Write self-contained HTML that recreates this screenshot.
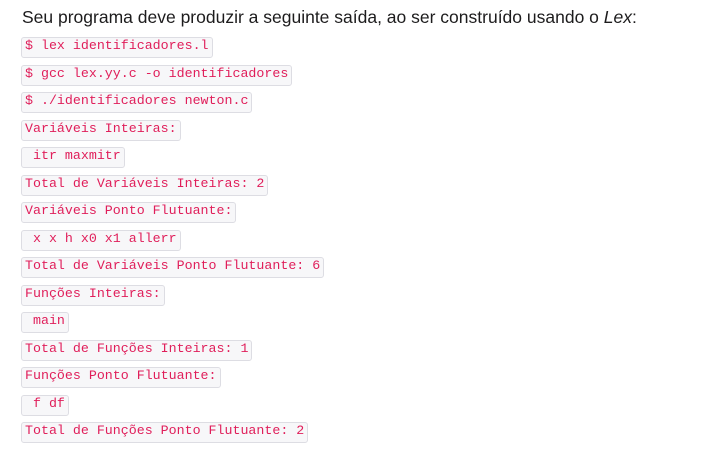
<!DOCTYPE html>
<html><head><meta charset="utf-8"><style>
body{margin:0;background:#fff;width:721px;height:456px;overflow:hidden}
.h{position:absolute;left:22px;top:7px;font:17.5px "Liberation Sans",sans-serif;color:#1d1c1d;white-space:nowrap}
.c{position:absolute;left:21px;height:19px;line-height:20px;padding:0 3px;font:13.3px "Liberation Mono",monospace;color:#e01e5a;background:#f7f7f9;border:1px solid #dddde3;border-radius:3px;white-space:pre}
</style></head><body>
<div class="h">Seu programa deve produzir a seguinte saída, ao ser construído usando o <i>Lex</i>:</div>
<div class="c" style="top:37px">$ lex identificadores.l</div>
<div class="c" style="top:64.5px">$ gcc lex.yy.c -o identificadores</div>
<div class="c" style="top:92px">$ ./identificadores newton.c</div>
<div class="c" style="top:119.5px">Variáveis Inteiras:</div>
<div class="c" style="top:147px"> itr maxmitr</div>
<div class="c" style="top:174.5px">Total de Variáveis Inteiras: 2</div>
<div class="c" style="top:202px">Variáveis Ponto Flutuante:</div>
<div class="c" style="top:229.5px"> x x h x0 x1 allerr</div>
<div class="c" style="top:257px">Total de Variáveis Ponto Flutuante: 6</div>
<div class="c" style="top:284.5px">Funções Inteiras:</div>
<div class="c" style="top:312px"> main</div>
<div class="c" style="top:339.5px">Total de Funções Inteiras: 1</div>
<div class="c" style="top:367px">Funções Ponto Flutuante:</div>
<div class="c" style="top:394.5px"> f df</div>
<div class="c" style="top:422px">Total de Funções Ponto Flutuante: 2</div>
</body></html>
